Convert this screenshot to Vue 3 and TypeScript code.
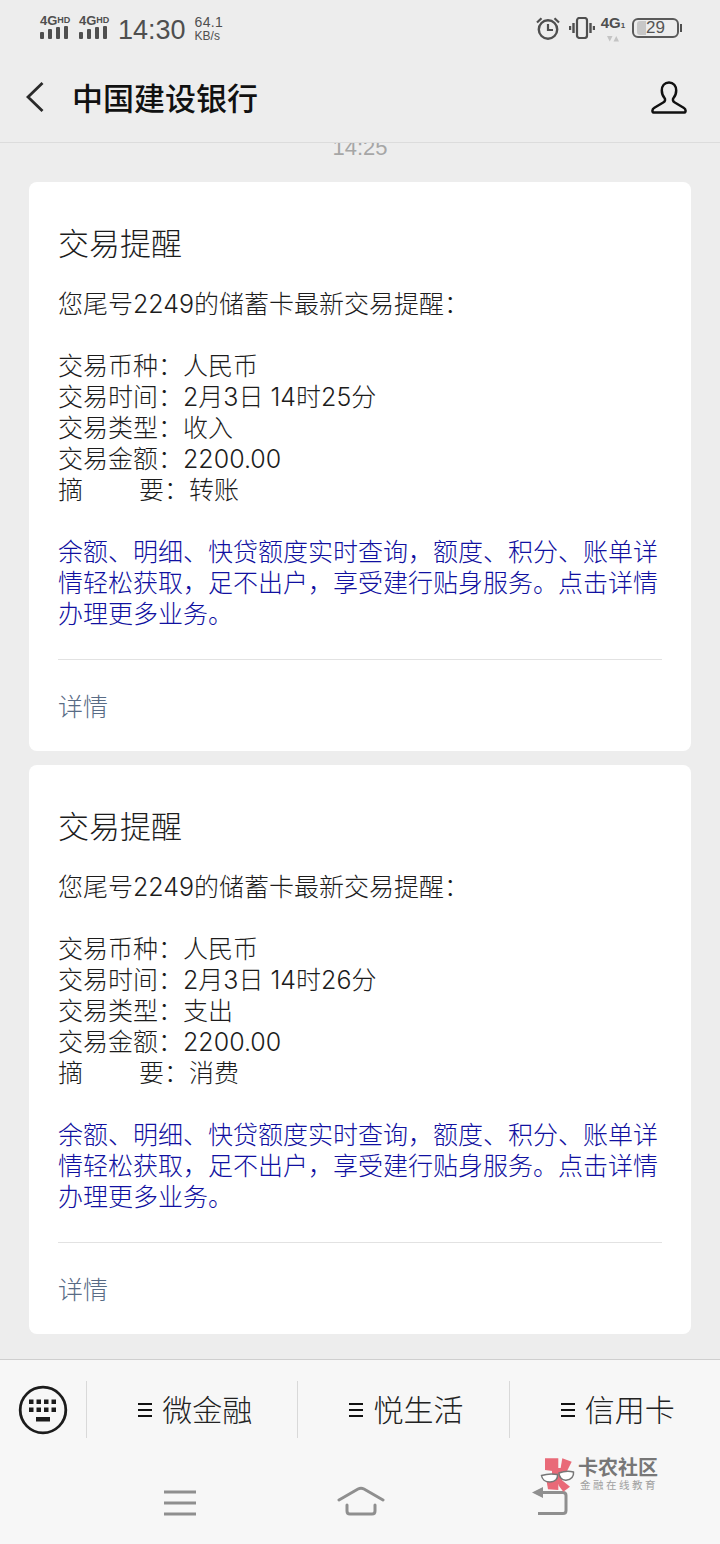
<template>
  <div class="phone">
    <div class="status-bar">
      <div class="status-left">
        <div v-for="n in 2" :key="n" class="signal">
          <div class="signal__label">4G<span>HD</span></div>
          <div class="signal__bars">
            <i v-for="h in [7, 10, 12, 13]" :key="h" :style="{ height: h + 'px' }"></i>
          </div>
        </div>
        <span class="clock">14:30</span>
        <div class="speed">
          <span class="speed__num">64.1</span>
          <span class="speed__unit">KB/s</span>
        </div>
      </div>
      <div class="status-right">
        <svg class="ico-alarm" width="24" height="23" viewBox="0 0 24 23" fill="none" stroke="#4f4f4f">
          <circle cx="12" cy="12.5" r="9.2" stroke-width="2.4" />
          <path d="M12 7v6h5" stroke-width="2.2" />
          <path d="M1 5.500 5.500 1.200M23 5.500 18.500 1.200" stroke-width="2.2" />
        </svg>
        <svg class="ico-vibrate" width="26" height="22" viewBox="0 0 26 22" fill="none" stroke="#4f4f4f">
          <rect x="8" y="1" width="10" height="20" rx="2.500" stroke-width="2.200" />
          <path d="M4.500 6v10M1 9v4M21.500 6v10M25 9v4" stroke-width="2.400" />
        </svg>
        <div class="net">
          <div class="net__label">4G<span>1</span></div>
          <svg width="12" height="6" viewBox="0 0 12 6" fill="#c4c4c4">
            <path d="M0 0h5.500L2.750 5.500zM6.500 5.500h5.500L9.250 0z" />
          </svg>
        </div>
        <div class="battery">
          <div class="battery__body">
            <div class="battery__fill"></div>
            <span>29</span>
          </div>
          <div class="battery__cap"></div>
        </div>
      </div>
    </div>

    <header class="title-bar">
      <svg class="back" width="18" height="30" viewBox="0 0 18 30" fill="none" stroke="#2a2a2a" stroke-width="2.800">
        <path d="M16.500 1 2 15l14.500 14" />
      </svg>
      <h1>中国建设银行</h1>
      <svg class="profile" width="36" height="33" viewBox="0 0 36 33" fill="none" stroke="#111" stroke-width="2.500" stroke-linejoin="round">
        <path d="M18 1.500c-4.500 0-7.200 3.400-7.200 8 0 3.300 1.200 5.800 2.700 7.500 1 1.300.7 3.300-.9 4.200L3 27c-2 1.100-2 4.500-.5 4.500h31c1.500 0 1.500-3.400-.5-4.500l-9.600-5.800c-1.600-.9-1.900-2.900-.9-4.200 1.500-1.700 2.700-4.200 2.700-7.500 0-4.600-2.700-8-7.200-8z" />
      </svg>
    </header>

    <main class="messages">
      <div class="time">14:25</div>
      <article v-for="m in messages" :key="m.time" class="card">
        <h2>交易提醒</h2>
        <p class="line">您尾号2249的储蓄卡最新交易提醒：</p>
        <div class="gap"></div>
        <p class="line">交易币种：人民币</p>
        <p class="line">交易时间：2月3日 {{ m.time }}</p>
        <p class="line">交易类型：{{ m.type }}</p>
        <p class="line">交易金额：2200.00</p>
        <p class="line">摘<span class="indent"></span>要：{{ m.note }}</p>
        <div class="gap gap--short"></div>
        <p class="promo">余额、明细、快贷额度实时查询，额度、积分、账单详情轻松获取，足不出户，享受建行贴身服务。点击详情办理更多业务。</p>
        <div class="rule"></div>
        <a class="detail">详情</a>
      </article>
    </main>

    <section class="menu">
      <div class="menu__kbd">
        <svg width="50" height="50" viewBox="0 0 50 50">
          <circle cx="25" cy="25" r="22.8" fill="none" stroke="#1c1c1c" stroke-width="2.800" />
          <g fill="#1c1c1c">
            <rect v-for="k in keys" :key="k.id" :x="k.x" :y="k.y" width="4.500" height="4.500" />
            <rect x="18" y="32" width="14" height="4.500" />
          </g>
        </svg>
      </div>
      <div v-for="item in menu" :key="item" class="menu__item">
        <span class="menu__bars"><i></i><i></i><i></i></span>
        <span>{{ item }}</span>
      </div>
    </section>

    <nav class="nav">
      <svg class="nav__menu" width="34" height="26" viewBox="0 0 34 26" fill="none" stroke="#8f8f8f" stroke-width="3">
        <path d="M1 2h32M1 13h32M1 24h32" />
      </svg>
      <svg class="nav__home" width="48" height="30" viewBox="0 0 48 30" fill="none" stroke="#8f8f8f" stroke-width="3" stroke-linecap="round">
        <path d="M2 14 21 3c2-1 4-1 6 0l19 11" />
        <path d="M10 19v6c0 2 1 3 3 3h22c2 0 3-1 3-3v-6" />
      </svg>
      <svg class="nav__return" width="36" height="28" viewBox="0 0 36 28" fill="none" stroke="#8f8f8f" stroke-width="3">
        <path d="M10 5.500h21c2 0 3 1 3 3v15c0 2-1 3-3 3H6" />
        <path d="M0 5.500 11 0v11z" fill="#8f8f8f" stroke="none" />
      </svg>
    </nav>

    <div class="watermark">
      <svg width="38" height="38" viewBox="0 0 38 38">
        <g fill="#e96a78">
          <path d="M5 2.300h13.300v13.400L5 14z" />
          <path d="M22.300 2.300l9.400 3.400-5 10H20z" />
          <path d="M12 12h10v16H12z" />
          <path d="M6.700 25.700 18.300 24v10L8 33.300z" />
          <path d="M18.300 24h3.400L30 30.700l-6.700 5-5-6.700z" />
        </g>
        <g fill="#fff" stroke="#777" stroke-width="1.500">
          <path d="M1.500 19.500C6 18 12 17.500 17.500 18.500c.5 4-2 7.500-7.500 7.500-5 0-8-3-8.500-6.500z" />
          <path d="M19 17c4-1.500 10-2 14.500-1 .5 4-2 8-7.500 8.200-4.500.2-7-3.500-7-7.200z" />
        </g>
      </svg>
      <div class="watermark__text">
        <div class="watermark__big">卡农社区</div>
        <div class="watermark__small">金融在线教育</div>
      </div>
    </div>
  </div>
</template>

<script setup lang="ts">
interface Message {
  time: string
  type: string
  note: string
}

const messages: Message[] = [
  { time: '14时25分', type: '收入', note: '转账' },
  { time: '14时26分', type: '支出', note: '消费' }
]

const menu = ['微金融', '悦生活', '信用卡']

const keys: { id: number; x: number; y: number }[] = []
for (let row = 0; row < 2; row++) {
  for (let col = 0; col < 4; col++) {
    keys.push({ id: row * 4 + col, x: 11 + col * 7.5, y: 14.5 + row * 8 })
  }
}
</script>

<style scoped>
.phone {
  position: relative;
  width: 720px;
  height: 1544px;
  display: flex;
  flex-direction: column;
  overflow: hidden;
  background: #ededed;
  font-family: "Noto Sans CJK SC", "Noto Sans", sans-serif;
  color: #1c1c1c;
}

.status-bar {
  height: 64px;
  display: flex;
  justify-content: space-between;
  padding: 14px 40px 0;
  box-sizing: border-box;
  font-family: "Liberation Sans", sans-serif;
  color: #4f4f4f;
}

.status-left,
.status-right {
  display: flex;
  align-items: flex-start;
}

.signal {
  width: 30px;
  margin-right: 9px;
}

.signal__label {
  font-size: 13px;
  line-height: 12px;
  font-weight: 700;
  white-space: nowrap;
}

.signal__label span {
  font-size: 9px;
  vertical-align: 2px;
}

.signal__bars {
  display: flex;
  align-items: flex-end;
  gap: 4px;
  height: 13px;
  margin-top: -1px;
}

.signal__bars i {
  width: 4px;
  background: #4f4f4f;
  border-radius: 1px;
}

.clock {
  font-size: 27px;
  line-height: 32px;
}

.speed {
  display: flex;
  flex-direction: column;
  margin-left: 9px;
  padding-top: 1px;
}

.speed__num {
  font-size: 14px;
  line-height: 15px;
  letter-spacing: 0.3px;
}

.speed__unit {
  font-size: 12px;
  line-height: 12px;
}

.status-right svg {
  flex-shrink: 0;
}

.ico-alarm {
  margin: 3px 9px 0 0;
}

.ico-vibrate {
  margin: 3px 7px 0 0;
}

.net {
  width: 22px;
  margin-right: 8px;
  display: flex;
  flex-direction: column;
  align-items: center;
}

.net__label {
  font-size: 15px;
  line-height: 17px;
  font-weight: 700;
  white-space: nowrap;
}

.net__label span {
  font-size: 8px;
}

.net svg {
  display: block;
  margin-top: 2px;
}

.battery {
  display: flex;
  align-items: center;
  margin: 4px -2px 0 0;
}

.battery__body {
  position: relative;
  width: 43px;
  height: 16px;
  border: 2px solid #5a5a5a;
  border-radius: 6px;
  display: flex;
  align-items: center;
  justify-content: center;
  font-size: 17px;
  color: #555;
}

.battery__fill {
  position: absolute;
  left: 3px;
  top: 1px;
  bottom: 1px;
  width: 9px;
  background: #c7c7c7;
  border-radius: 3px 0 0 3px;
}

.battery__body span {
  position: relative;
}

.battery__cap {
  width: 2px;
  height: 8px;
  background: #4f4f4f;
  margin-left: 1px;
}

.title-bar {
  height: 79px;
  display: flex;
  align-items: center;
  padding: 0 33px 12px 26px;
  box-sizing: border-box;
  border-bottom: 1px solid #dcdcdc;
}

.title-bar h1 {
  flex: 1;
  margin: 0 0 0 28px;
  font-size: 31px;
  line-height: 40px;
  font-weight: 500;
  color: #111;
}

.messages {
  flex: 1;
  min-height: 0;
  overflow: hidden;
  padding: 0 29px;
}

.time {
  height: 51px;
  margin-top: -12px;
  text-align: center;
  font-size: 22px;
  line-height: 34px;
  font-family: "Liberation Sans", sans-serif;
  color: #a6a6a6;
}

.card {
  height: 569px;
  box-sizing: border-box;
  margin-bottom: 14px;
  padding: 41px 29px 0;
  background: #fff;
  border-radius: 8px;
}

.card h2 {
  margin: 0 0 28px;
  font-size: 31px;
  line-height: 38px;
  font-weight: 300;
  color: #1c1c1c;
}

.line,
.promo {
  margin: 0;
  font-size: 25px;
  line-height: 31px;
  font-weight: 300;
  white-space: nowrap;
}

.line {
  font-family: Inter, "Noto Sans CJK SC", sans-serif;
}

.promo {
  white-space: normal;
  color: #1010a0;
}

.gap {
  height: 31px;
}

.gap--short {
  height: 29px;
}

.indent {
  display: inline-block;
  width: 56px;
}

.rule {
  height: 1px;
  margin-top: 31px;
  background: #e2e2e2;
}

.detail {
  display: block;
  margin-top: 30px;
  font-size: 25px;
  line-height: 31px;
  font-weight: 300;
  color: #586b85;
}

.menu {
  height: 86px;
  flex-shrink: 0;
  display: flex;
  align-items: flex-start;
  padding-top: 21px;
  border-top: 1px solid #cfcfcf;
  background: #f7f7f7;
  box-sizing: border-box;
}

.menu__kbd {
  width: 86px;
  margin-top: 4px;
  display: flex;
  justify-content: center;
}

.menu__item {
  flex: 1;
  height: 57px;
  padding: 0 0 4px 6px;
  box-sizing: border-box;
  display: flex;
  align-items: center;
  justify-content: center;
  gap: 10px;
  border-left: 1px solid #d9d9d9;
  font-size: 30px;
  font-weight: 300;
  color: #222;
}

.menu__bars {
  display: flex;
  flex-direction: column;
  gap: 4px;
  margin-top: 4px;
}

.menu__bars i {
  width: 14px;
  height: 2px;
  background: #111;
}

.nav {
  height: 99px;
  flex-shrink: 0;
  display: flex;
  align-items: flex-start;
  padding: 41px 0 0 163px;
  box-sizing: border-box;
  background: #f7f7f7;
}

.nav__menu {
  margin-top: 4px;
}

.nav__home {
  margin-left: 140px;
}

.nav__return {
  margin: 1px 0 0 147px;
}

.watermark {
  position: absolute;
  left: 540px;
  top: 1456px;
  display: flex;
  gap: 0;
}

.watermark__text {
  display: flex;
  flex-direction: column;
  align-items: flex-start;
  color: #777;
}

.watermark__big {
  font-size: 20px;
  line-height: 22px;
  font-weight: 700;
}

.watermark__small {
  margin-left: 2px;
  font-size: 10.5px;
  line-height: 14px;
  letter-spacing: 2.500px;
  white-space: nowrap;
  color: #a0a0a0;
}
</style>
